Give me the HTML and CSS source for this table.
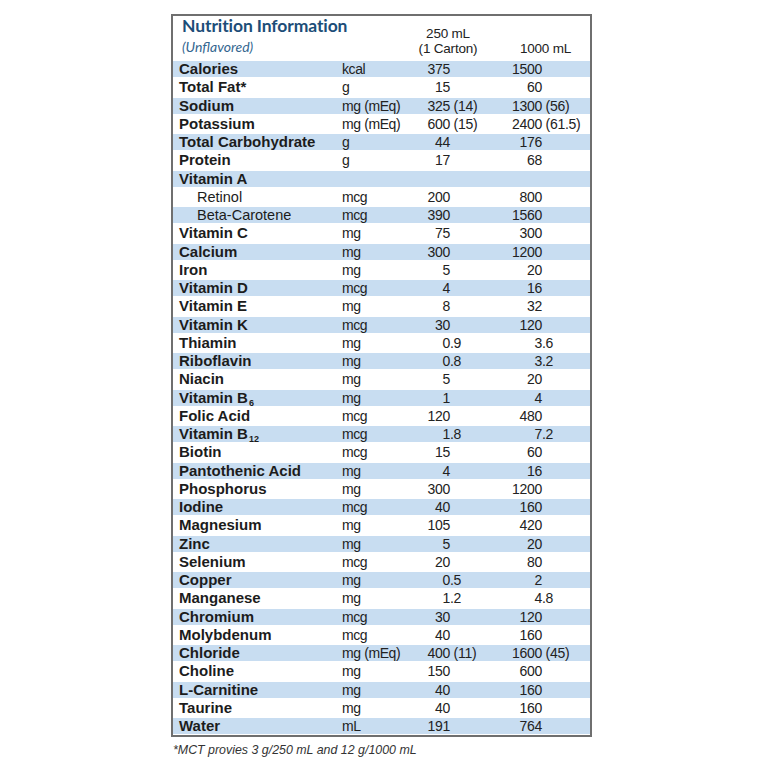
FILE: index.html
```html
<!DOCTYPE html>
<html>
<head>
<meta charset="utf-8">
<link rel="stylesheet" href="styles.css">
</head>
<body>
<div class="panel">
  <div class="head">
    <div class="ttl">
      <div class="t1">Nutrition Information</div>
      <div class="t2">(Unflavored)</div>
    </div>
    <div class="h1">250 mL<br>(1 Carton)</div>
    <div class="h2">1000 mL</div>
  </div>
  <div class="rows">
    <div class="row"><span class="n">Calories</span><span class="u">kcal</span><span class="i">375</span><span class="f"></span><span class="i">1500</span><span class="f"></span></div>
    <div class="row"><span class="n">Total Fat*</span><span class="u">g</span><span class="i">15</span><span class="f"></span><span class="i">60</span><span class="f"></span></div>
    <div class="row"><span class="n">Sodium</span><span class="u">mg (mEq)</span><span class="i">325</span><span class="f">&nbsp;(14)</span><span class="i">1300</span><span class="f">&nbsp;(56)</span></div>
    <div class="row"><span class="n">Potassium</span><span class="u">mg (mEq)</span><span class="i">600</span><span class="f">&nbsp;(15)</span><span class="i">2400</span><span class="f">&nbsp;(61.5)</span></div>
    <div class="row"><span class="n">Total Carbohydrate</span><span class="u">g</span><span class="i">44</span><span class="f"></span><span class="i">176</span><span class="f"></span></div>
    <div class="row"><span class="n">Protein</span><span class="u">g</span><span class="i">17</span><span class="f"></span><span class="i">68</span><span class="f"></span></div>
    <div class="row"><span class="n">Vitamin A</span><span class="u"></span><span class="i"></span><span class="f"></span><span class="i"></span><span class="f"></span></div>
    <div class="row"><span class="n sub">Retinol</span><span class="u">mcg</span><span class="i">200</span><span class="f"></span><span class="i">800</span><span class="f"></span></div>
    <div class="row"><span class="n sub">Beta-Carotene</span><span class="u">mcg</span><span class="i">390</span><span class="f"></span><span class="i">1560</span><span class="f"></span></div>
    <div class="row"><span class="n">Vitamin C</span><span class="u">mg</span><span class="i">75</span><span class="f"></span><span class="i">300</span><span class="f"></span></div>
    <div class="row"><span class="n">Calcium</span><span class="u">mg</span><span class="i">300</span><span class="f"></span><span class="i">1200</span><span class="f"></span></div>
    <div class="row"><span class="n">Iron</span><span class="u">mg</span><span class="i">5</span><span class="f"></span><span class="i">20</span><span class="f"></span></div>
    <div class="row"><span class="n">Vitamin D</span><span class="u">mcg</span><span class="i">4</span><span class="f"></span><span class="i">16</span><span class="f"></span></div>
    <div class="row"><span class="n">Vitamin E</span><span class="u">mg</span><span class="i">8</span><span class="f"></span><span class="i">32</span><span class="f"></span></div>
    <div class="row"><span class="n">Vitamin K</span><span class="u">mcg</span><span class="i">30</span><span class="f"></span><span class="i">120</span><span class="f"></span></div>
    <div class="row"><span class="n">Thiamin</span><span class="u">mg</span><span class="i">0</span><span class="f">.9</span><span class="i">3</span><span class="f">.6</span></div>
    <div class="row"><span class="n">Riboflavin</span><span class="u">mg</span><span class="i">0</span><span class="f">.8</span><span class="i">3</span><span class="f">.2</span></div>
    <div class="row"><span class="n">Niacin</span><span class="u">mg</span><span class="i">5</span><span class="f"></span><span class="i">20</span><span class="f"></span></div>
    <div class="row"><span class="n">Vitamin B<sub>6</sub></span><span class="u">mg</span><span class="i">1</span><span class="f"></span><span class="i">4</span><span class="f"></span></div>
    <div class="row"><span class="n">Folic Acid</span><span class="u">mcg</span><span class="i">120</span><span class="f"></span><span class="i">480</span><span class="f"></span></div>
    <div class="row"><span class="n">Vitamin B<sub>12</sub></span><span class="u">mcg</span><span class="i">1</span><span class="f">.8</span><span class="i">7</span><span class="f">.2</span></div>
    <div class="row"><span class="n">Biotin</span><span class="u">mcg</span><span class="i">15</span><span class="f"></span><span class="i">60</span><span class="f"></span></div>
    <div class="row"><span class="n">Pantothenic Acid</span><span class="u">mg</span><span class="i">4</span><span class="f"></span><span class="i">16</span><span class="f"></span></div>
    <div class="row"><span class="n">Phosphorus</span><span class="u">mg</span><span class="i">300</span><span class="f"></span><span class="i">1200</span><span class="f"></span></div>
    <div class="row"><span class="n">Iodine</span><span class="u">mcg</span><span class="i">40</span><span class="f"></span><span class="i">160</span><span class="f"></span></div>
    <div class="row"><span class="n">Magnesium</span><span class="u">mg</span><span class="i">105</span><span class="f"></span><span class="i">420</span><span class="f"></span></div>
    <div class="row"><span class="n">Zinc</span><span class="u">mg</span><span class="i">5</span><span class="f"></span><span class="i">20</span><span class="f"></span></div>
    <div class="row"><span class="n">Selenium</span><span class="u">mcg</span><span class="i">20</span><span class="f"></span><span class="i">80</span><span class="f"></span></div>
    <div class="row"><span class="n">Copper</span><span class="u">mg</span><span class="i">0</span><span class="f">.5</span><span class="i">2</span><span class="f"></span></div>
    <div class="row"><span class="n">Manganese</span><span class="u">mg</span><span class="i">1</span><span class="f">.2</span><span class="i">4</span><span class="f">.8</span></div>
    <div class="row"><span class="n">Chromium</span><span class="u">mcg</span><span class="i">30</span><span class="f"></span><span class="i">120</span><span class="f"></span></div>
    <div class="row"><span class="n">Molybdenum</span><span class="u">mcg</span><span class="i">40</span><span class="f"></span><span class="i">160</span><span class="f"></span></div>
    <div class="row"><span class="n">Chloride</span><span class="u">mg (mEq)</span><span class="i">400</span><span class="f">&nbsp;(11)</span><span class="i">1600</span><span class="f">&nbsp;(45)</span></div>
    <div class="row"><span class="n">Choline</span><span class="u">mg</span><span class="i">150</span><span class="f"></span><span class="i">600</span><span class="f"></span></div>
    <div class="row"><span class="n">L-Carnitine</span><span class="u">mg</span><span class="i">40</span><span class="f"></span><span class="i">160</span><span class="f"></span></div>
    <div class="row"><span class="n">Taurine</span><span class="u">mg</span><span class="i">40</span><span class="f"></span><span class="i">160</span><span class="f"></span></div>
    <div class="row"><span class="n">Water</span><span class="u">mL</span><span class="i">191</span><span class="f"></span><span class="i">764</span><span class="f"></span></div>
  </div>
</div>
<p class="note">*MCT provies 3 g/250 mL and 12 g/1000 mL</p>
</body>
</html>
```

FILE: styles.css
```css
html, body {
  margin: 0;
  padding: 0;
  background: #ffffff;
}
body {
  font-family: "Liberation Sans", Arial, sans-serif;
  color: #1e1e1e;
}
.panel {
  margin: 14px 0 0 171px;
  width: 421px;
  box-sizing: border-box;
  border: 2px solid #6f6f6f;
}
.head {
  display: grid;
  grid-template-columns: 236px 78px 1fr;
  height: 44px;
  box-sizing: border-box;
}
.ttl {
  padding: 0 0 0 9px;
}
.t1 {
  font-family: Lato, "Noto Sans", sans-serif;
  font-weight: 700;
  font-size: 17.5px;
  line-height: 20px;
  color: #1c4d78;
  letter-spacing: -0.1px;
}
.t2 {
  font-family: Lato, "Noto Sans", sans-serif;
  font-style: italic;
  font-weight: 400;
  font-size: 14px;
  line-height: 18px;
  color: #33668f;
  margin-top: 2px;
}
.h1, .h2 {
  font-size: 13.5px;
  line-height: 15px;
  text-align: center;
  align-self: end;
  padding-bottom: 4px;
  color: #222;
  letter-spacing: -0.2px;
}
.h2 {
  padding-left: 14px;
}
.row {
  display: grid;
  grid-template-columns: 163px 60px 48px 44px 48px 1fr;
  height: 18.25px;
  align-items: center;
  padding-left: 6px;
  white-space: nowrap;
  line-height: 16px;
}
.row:nth-child(odd) {
  background: linear-gradient(to bottom, transparent 1px, #c8ddf1 1px, #c8ddf1 calc(100% - 1px), transparent calc(100% - 1px));
}
.n {
  font-weight: 700;
  font-size: 15px;
  color: #1c1c1c;
}
.n.sub {
  font-weight: 400;
  padding-left: 18px;
  font-size: 14.5px;
}
.n sub {
  font-size: 9px;
  vertical-align: -3px;
  line-height: 0;
  margin-left: 1px;
}
.u {
  font-size: 14px;
  color: #222;
  letter-spacing: -0.4px;
}
.i {
  font-size: 14px;
  text-align: right;
  color: #222;
  letter-spacing: -0.3px;
}
.f {
  font-size: 14px;
  text-align: left;
  color: #222;
  letter-spacing: -0.3px;
}
.note {
  margin: 6px 0 0 173px;
  font-style: italic;
  font-size: 12.4px;
  color: #333;
}
```
